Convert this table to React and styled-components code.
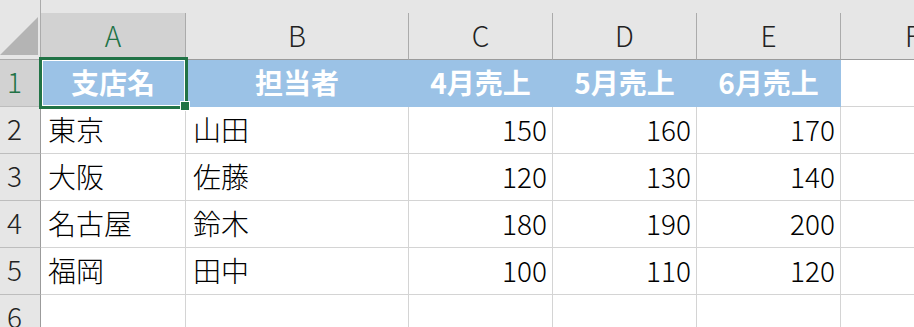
import React from "react";
import styled, { createGlobalStyle, css } from "styled-components";

const GlobalStyle = createGlobalStyle`
  html, body {
    margin: 0;
    padding: 0;
    background: #ffffff;
  }
  body {
    font-family: "Noto Sans CJK JP", "Noto Sans", sans-serif;
  }
`;

const Sheet = styled.div`
  width: 914px;
  height: 327px;
  overflow: hidden;
  background: #e6e6e6;
  padding-top: 13px;
  box-sizing: border-box;
`;

const Grid = styled.div`
  position: relative;
  display: grid;
  grid-template-columns: 41px 145px 223px 144px 144px 144px 144px;
  grid-template-rows: 47px repeat(6, 47px);
  font-size: 28px;
  font-weight: 300;
  line-height: 1;
`;

const Corner = styled.div`
  position: relative;
  background: #e6e6e6;
  border-right: 1px solid #ababab;
  border-bottom: 1px solid #ababab;
  box-sizing: border-box;
  margin-top: -13px;
  height: 60px;
  display: flex;
  align-items: flex-end;
  justify-content: flex-end;
  padding: 0 2px 4px 0;
  svg {
    display: block;
  }
`;

const ColHead = styled.div`
  background: ${(p) => (p.$active ? "#d2d2d2" : "#e6e6e6")};
  color: ${(p) => (p.$active ? "#217346" : "#222222")};
  border-right: 1px solid #ababab;
  border-bottom: 1px solid #9b9b9b;
  box-sizing: border-box;
  display: flex;
  align-items: center;
  justify-content: center;
  padding-bottom: 2px;
`;

const RowHead = styled.div`
  background: ${(p) => (p.$active ? "#d2d2d2" : "#e6e6e6")};
  color: ${(p) => (p.$active ? "#217346" : "#222222")};
  border-right: 1px solid #9b9b9b;
  border-bottom: 1px solid #bdbdbd;
  box-sizing: border-box;
  display: flex;
  align-items: center;
  padding: 0 0 4px 7px;
`;

const Cell = styled.div`
  background: #ffffff;
  color: #000000;
  border-right: 1px solid #d4d4d4;
  border-bottom: 1px solid #d4d4d4;
  box-sizing: border-box;
  display: flex;
  align-items: center;
  padding: 0 5px 2px 7px;
  white-space: nowrap;
  justify-content: ${(p) => (p.$num ? "flex-end" : "flex-start")};
  ${(p) =>
    p.$title &&
    css`
      background: #9bc2e6;
      border-color: #9bc2e6;
      color: #ffffff;
      font-weight: 700;
      justify-content: center;
      padding: 0 0 2px 0;
    `}
`;

const Selection = styled.div`
  position: absolute;
  left: 39px;
  top: 44px;
  width: 149px;
  height: 52px;
  box-sizing: border-box;
  border: 3px solid #217346;
  pointer-events: none;
  &::before {
    content: "";
    position: absolute;
    inset: 0;
    border: 1px solid #ffffff;
  }
`;

const FillHandle = styled.div`
  position: absolute;
  right: -4px;
  bottom: -4px;
  width: 8px;
  height: 8px;
  background: #217346;
  box-shadow: 0 0 0 1px #ffffff;
`;

const columns = ["A", "B", "C", "D", "E", "F"];

const titles = ["支店名", "担当者", "4月売上", "5月売上", "6月売上"];

const rows = [
  { branch: "東京", person: "山田", sales: [150, 160, 170] },
  { branch: "大阪", person: "佐藤", sales: [120, 130, 140] },
  { branch: "名古屋", person: "鈴木", sales: [180, 190, 200] },
  { branch: "福岡", person: "田中", sales: [100, 110, 120] },
];

export default function App() {
  return (
    <>
      <GlobalStyle />
      <Sheet>
        <Grid>
          <Corner>
            <svg width="38" height="38" viewBox="0 0 38 38">
              <polygon points="38,0 38,38 0,38" fill="#b4b4b4" />
            </svg>
          </Corner>
          {columns.map((c) => (
            <ColHead key={c} $active={c === "A"}>
              {c}
            </ColHead>
          ))}

          <RowHead $active>1</RowHead>
          {titles.map((t) => (
            <Cell key={t} $title>
              {t}
            </Cell>
          ))}
          <Cell />

          {rows.map((r, i) => (
            <React.Fragment key={r.branch}>
              <RowHead>{i + 2}</RowHead>
              <Cell>{r.branch}</Cell>
              <Cell>{r.person}</Cell>
              {r.sales.map((s, j) => (
                <Cell key={j} $num>
                  {s}
                </Cell>
              ))}
              <Cell />
            </React.Fragment>
          ))}

          <RowHead>6</RowHead>
          {columns.map((c) => (
            <Cell key={c} />
          ))}

          <Selection>
            <FillHandle />
          </Selection>
        </Grid>
      </Sheet>
    </>
  );
}
